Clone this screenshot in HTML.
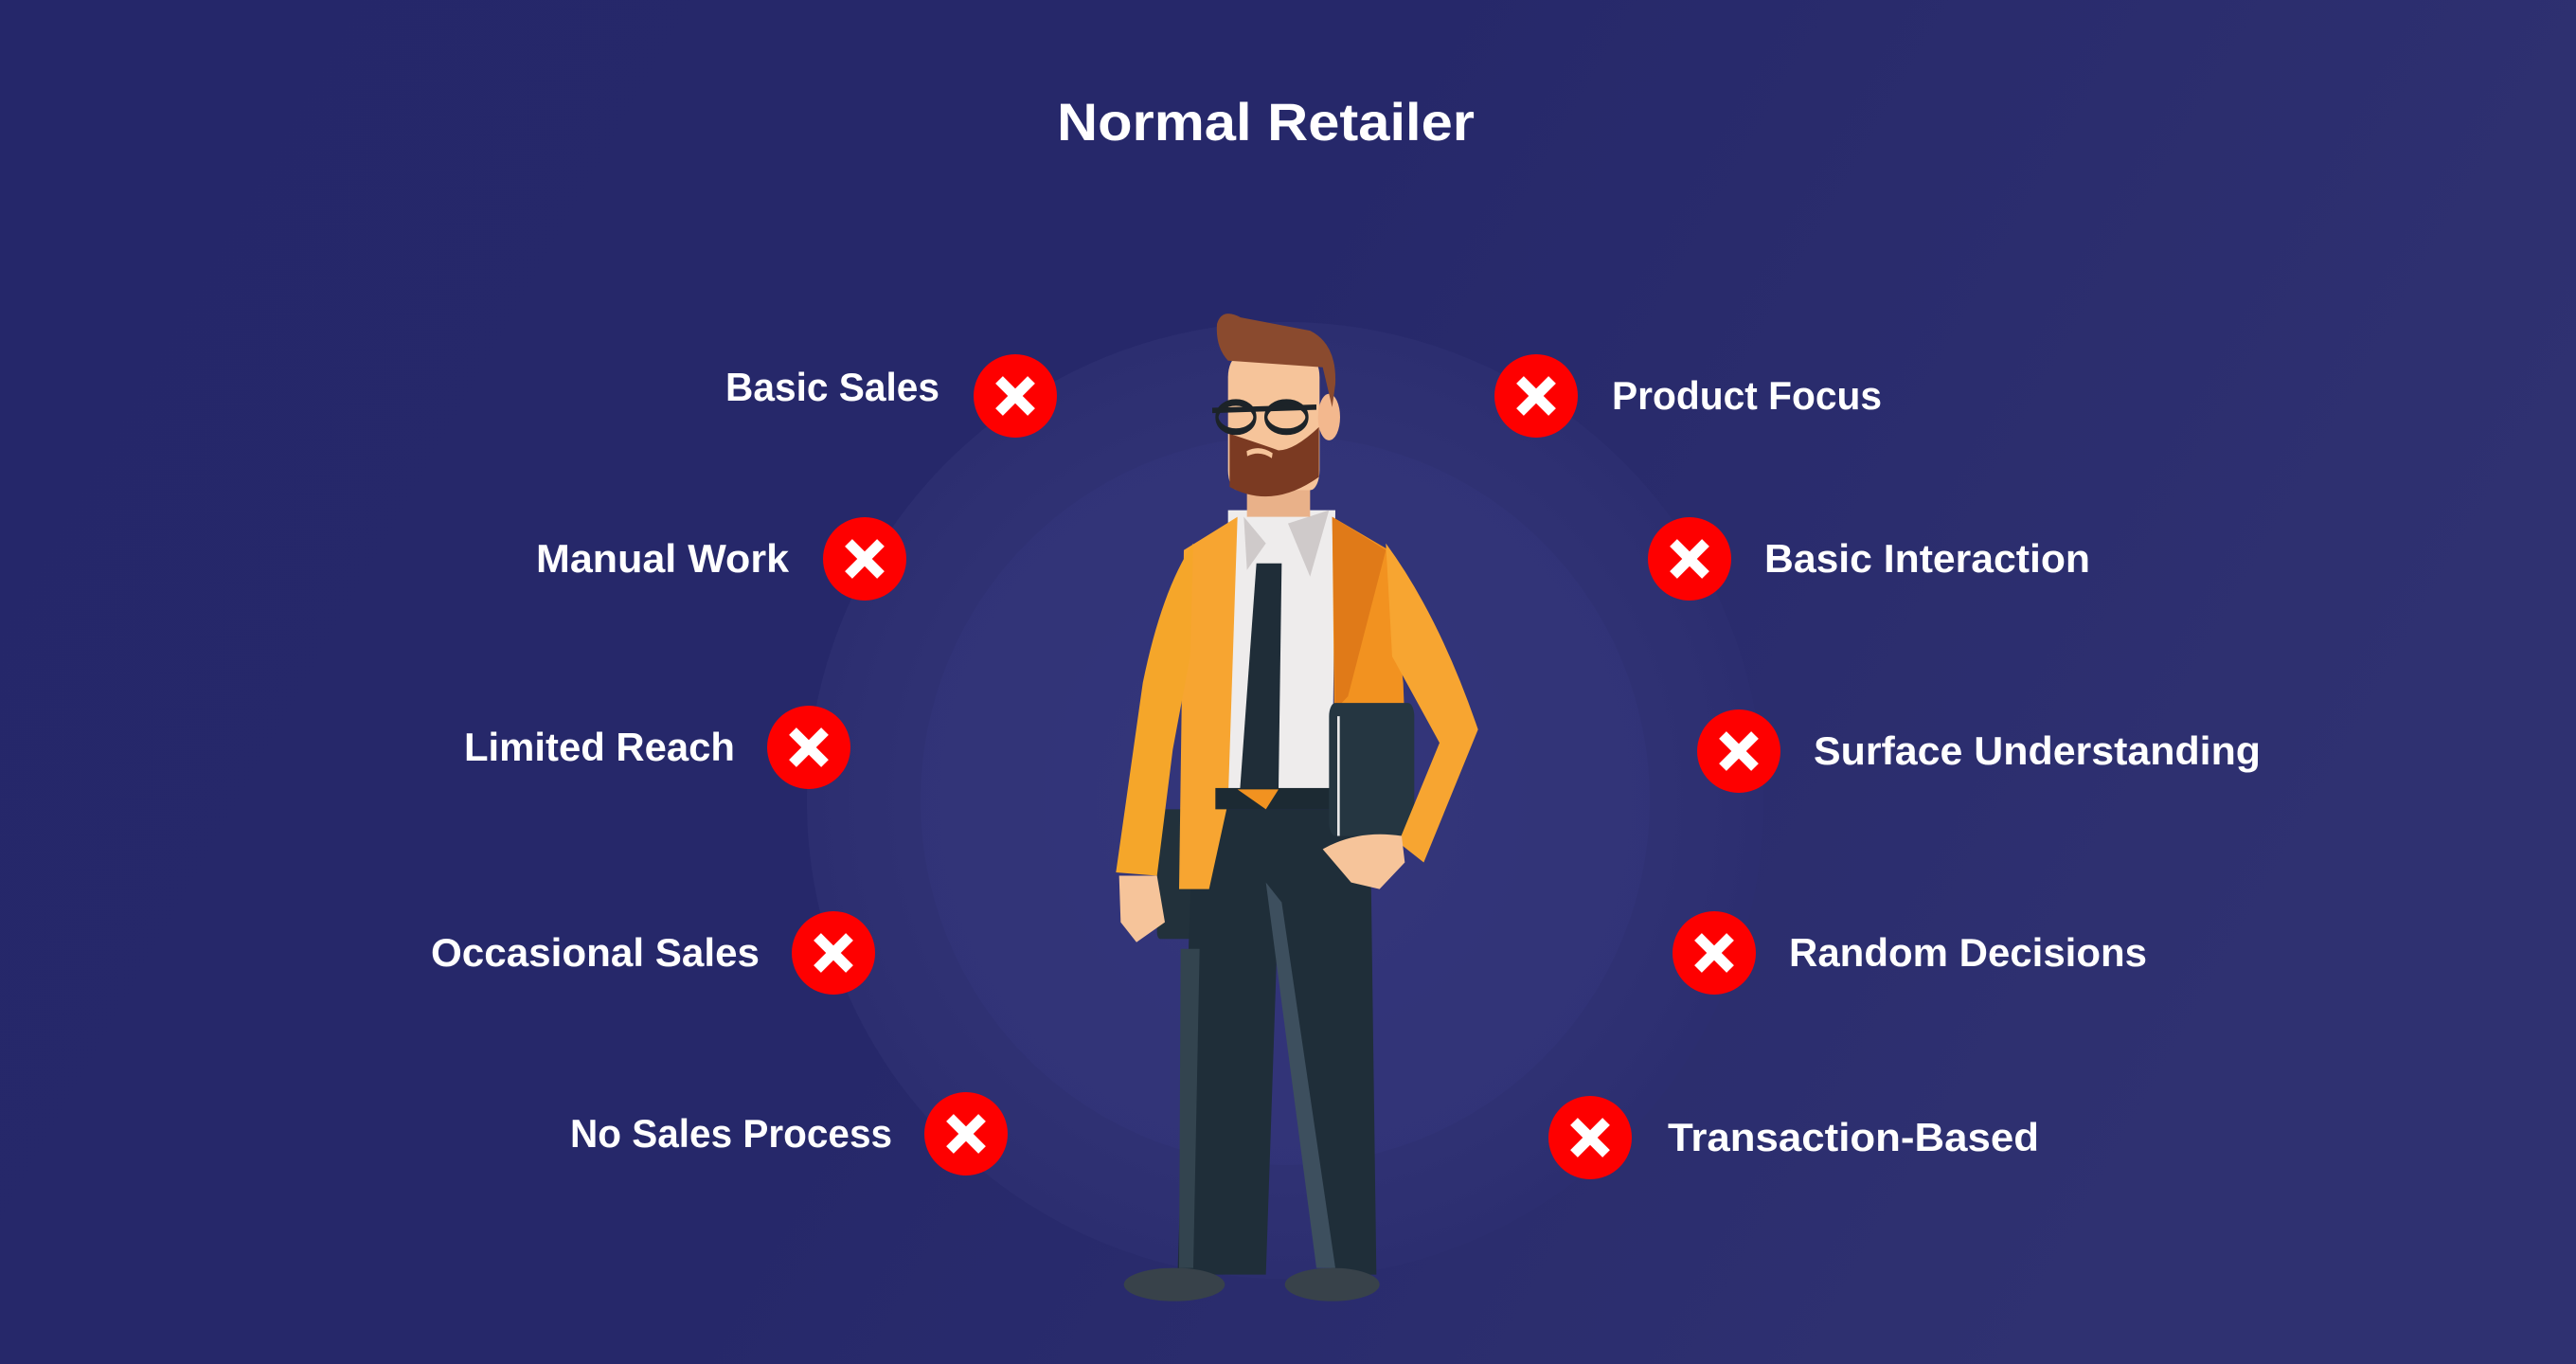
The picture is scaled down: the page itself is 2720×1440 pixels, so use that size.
<!DOCTYPE html>
<html><head><meta charset="utf-8"><style>
html,body{margin:0;padding:0;width:2720px;height:1440px;overflow:hidden;background:#27286a}
svg{display:block}
text{font-family:"Liberation Sans",sans-serif;font-weight:bold;fill:#fff}
</style></head><body>
<svg width="2720" height="1440" viewBox="0 0 2720 1440">
<defs>
<linearGradient id="bg" x1="0" y1="0" x2="1" y2="0.3">
<stop offset="0" stop-color="#25276a"/><stop offset="0.5" stop-color="#26286a"/><stop offset="1" stop-color="#2f3171"/>
</linearGradient>
<radialGradient id="glow" cx="0.5" cy="0.5" r="0.5">
<stop offset="0" stop-color="#34367a"/><stop offset="0.8" stop-color="#2f3173"/><stop offset="1" stop-color="#2c2e70"/>
</radialGradient>
<g id="x"><circle r="44" fill="#fe0000"/><path d="M-17,-17L17,17M17,-17L-17,17" stroke="#fff" stroke-width="11"/></g>
</defs>
<rect width="2720" height="1440" fill="url(#bg)"/>
<circle cx="1357" cy="845" r="505" fill="url(#glow)"/>
<circle cx="1357" cy="845" r="385" fill="#33357b" opacity="0.5"/>
<text x="1116" y="148" font-size="56" textLength="441" lengthAdjust="spacingAndGlyphs">Normal Retailer</text>

<use href="#x" x="1072" y="418"/><text x="992" y="423" font-size="42" text-anchor="end" textLength="226" lengthAdjust="spacingAndGlyphs">Basic Sales</text>
<use href="#x" x="913" y="590"/><text x="833" y="604" font-size="42" text-anchor="end" textLength="267" lengthAdjust="spacingAndGlyphs">Manual Work</text>
<use href="#x" x="854" y="789"/><text x="776" y="803" font-size="42" text-anchor="end" textLength="286" lengthAdjust="spacingAndGlyphs">Limited Reach</text>
<use href="#x" x="880" y="1006"/><text x="802" y="1020" font-size="42" text-anchor="end" textLength="347" lengthAdjust="spacingAndGlyphs">Occasional Sales</text>
<use href="#x" x="1020" y="1197"/><text x="942" y="1211" font-size="42" text-anchor="end" textLength="340" lengthAdjust="spacingAndGlyphs">No Sales Process</text>

<use href="#x" x="1622" y="418"/><text x="1702" y="432" font-size="42" textLength="285" lengthAdjust="spacingAndGlyphs">Product Focus</text>
<use href="#x" x="1784" y="590"/><text x="1863" y="604" font-size="42" textLength="344" lengthAdjust="spacingAndGlyphs">Basic Interaction</text>
<use href="#x" x="1836" y="793"/><text x="1915" y="807" font-size="42" textLength="472" lengthAdjust="spacingAndGlyphs">Surface Understanding</text>
<use href="#x" x="1810" y="1006"/><text x="1889" y="1020" font-size="42" textLength="378" lengthAdjust="spacingAndGlyphs">Random Decisions</text>
<use href="#x" x="1679" y="1201"/><text x="1761" y="1215" font-size="42" textLength="392" lengthAdjust="spacingAndGlyphs">Transaction-Based</text>

<g transform="translate(1150,300) scale(0.33333,0.70175)">
 <rect x="215" y="790" width="120" height="195" rx="10" fill="#22313b"/>
 <path d="M330,790 L890,790 L910,1490 L770,1490 L600,930 L560,1490 L280,1490 Z" fill="#1f2e39"/>
 <path d="M560,900 L610,930 L780,1480 L720,1480 Z" fill="#3d4f5e"/>
 <path d="M290,1000 L350,1000 L330,1480 L285,1480 Z" fill="#33444f"/>
 <ellipse cx="270" cy="1505" rx="160" ry="25" fill="#38424a"/>
 <ellipse cx="770" cy="1505" rx="150" ry="25" fill="#38424a"/>
 <path d="M440,340 L780,340 L770,770 L440,770 Z" fill="#eeecec"/>
 <path d="M490,350 L560,390 L500,430 Z M630,360 L760,340 L700,440 Z" fill="#cfcaca"/>
 <path d="M530,420 L610,420 L600,760 L560,790 L478,760 Z" fill="#1f2d38"/>
 <path d="M300,400 L470,350 L440,780 L380,910 L285,910 Z" fill="#f7a531"/>
 <path d="M770,350 L950,400 L995,600 L1010,790 L780,790 Z" fill="#f29220"/>
 <path d="M770,350 L940,400 L820,620 L780,640 Z" fill="#e07a18"/>
 <rect x="400" y="758" width="370" height="32" fill="#1c2a33"/>
 <path d="M470,760 L600,760 L560,790 Z" fill="#f29220"/>
 <path d="M330,390 Q230,460 170,600 L85,885 L215,890 L265,700 L320,560 Z" fill="#f5a62a"/>
 <path d="M95,890 L215,890 L240,960 L150,990 L100,960 Z" fill="#f6c49a"/>
 <rect x="760" y="630" width="270" height="200" rx="20" fill="#253641"/>
 <path d="M790,650 L790,830" stroke="#e8e8e8" stroke-width="8"/>
 <path d="M940,390 Q1110,500 1232,670 L1060,870 L980,840 L1110,690 L960,560 Z" fill="#f7a531"/>
 <path d="M740,850 Q850,820 990,830 L1000,870 L920,910 L830,900 Z" fill="#f6c49a"/>
 <rect x="500" y="290" width="200" height="60" fill="#e9b189"/>
 <rect x="440" y="110" width="290" height="200" rx="30" fill="#f6c49a"/>
 <ellipse cx="760" cy="200" rx="35" ry="35" fill="#f3b88e"/>
 <path d="M405,60 Q420,35 480,50 L700,70 Q785,90 780,150 L770,185 L740,125 L440,115 Q400,95 405,60 Z" fill="#8a4a2e"/>
 <path d="M445,225 L445,305 Q580,340 728,290 L728,215 Q650,250 600,250 Q540,240 445,225 Z" fill="#7b3a22"/>
 <path d="M500,255 Q540,245 580,258" stroke="#f6c49a" stroke-width="8" fill="none"/>
 <ellipse cx="465" cy="200" rx="60" ry="22" fill="none" stroke="#1c2328" stroke-width="10"/>
 <ellipse cx="625" cy="200" rx="65" ry="22" fill="none" stroke="#1c2328" stroke-width="10"/>
 <line x1="390" y1="190" x2="720" y2="185" stroke="#1c2328" stroke-width="8"/>
</g>
</svg>
</body></html>
